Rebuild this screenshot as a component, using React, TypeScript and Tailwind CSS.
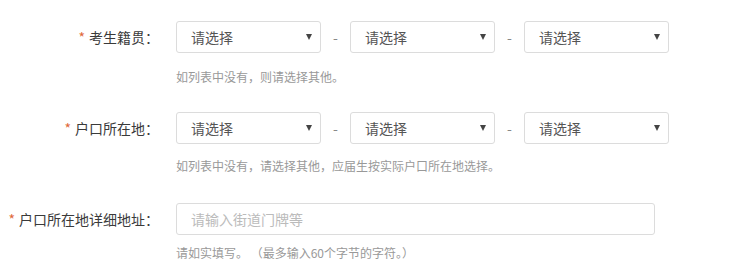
import React from "react"

const font = { fontFamily: '"Noto Sans CJK SC", "Noto Sans", sans-serif' }

function Select() {
  return (
    <div className="relative flex h-[32px] w-[145px] items-center rounded-[3px] border border-[#dcdcdc] bg-white pl-[14px] text-[14px] text-[#555]">
      请选择
      <svg className="absolute right-[8px] top-[12px]" width="6" height="6" viewBox="0 0 6 6">
        <path d="M0 0H6L3 6Z" fill="#444" />
      </svg>
    </div>
  )
}

function Dash() {
  return <span className="w-[29px] text-center text-[14px] text-[#888]">-</span>
}

function Label({ text }: { text: string }) {
  return (
    <div className="flex h-[32px] w-[176px] shrink-0 items-center justify-end pr-[17px] text-[14px] text-[#3a3a3a]">
      <span className="mr-[4px] text-[#e0693a]">*</span>
      {text}
    </div>
  )
}

function SelectRow({ label, hint, hintClass }: { label: string; hint: string; hintClass: string }) {
  return (
    <div className="flex items-start">
      <Label text={label} />
      <div className="flex flex-col">
        <div className="flex items-center">
          <Select />
          <Dash />
          <Select />
          <Dash />
          <Select />
        </div>
        <p className={`text-[12px] leading-[18px] text-[#999] ${hintClass}`}>{hint}</p>
      </div>
    </div>
  )
}

export default function App() {
  return (
    <div className="h-[275px] w-[744px] overflow-hidden bg-white pt-[21px]" style={font}>
      <SelectRow label="考生籍贯：" hint="如列表中没有，则请选择其他。" hintClass="mt-[15px]" />
      <div className="mt-[26px]">
        <SelectRow
          label="户口所在地："
          hint="如列表中没有，请选择其他，应届生按实际户口所在地选择。"
          hintClass="mt-[13px]"
        />
      </div>
      <div className="mt-[28px] flex items-start">
        <Label text="户口所在地详细地址：" />
        <div className="flex flex-col">
          <input
            className="h-[32px] w-[479px] rounded-[3px] border border-[#dcdcdc] bg-white pl-[14px] text-[14px] text-[#555] outline-none placeholder:text-[#bbb]"
            placeholder="请输入街道门牌等"
          />
          <p className="mt-[9px] text-[12px] leading-[18px] text-[#999]">请如实填写。 （最多输入60个字节的字符。）</p>
        </div>
      </div>
    </div>
  )
}
